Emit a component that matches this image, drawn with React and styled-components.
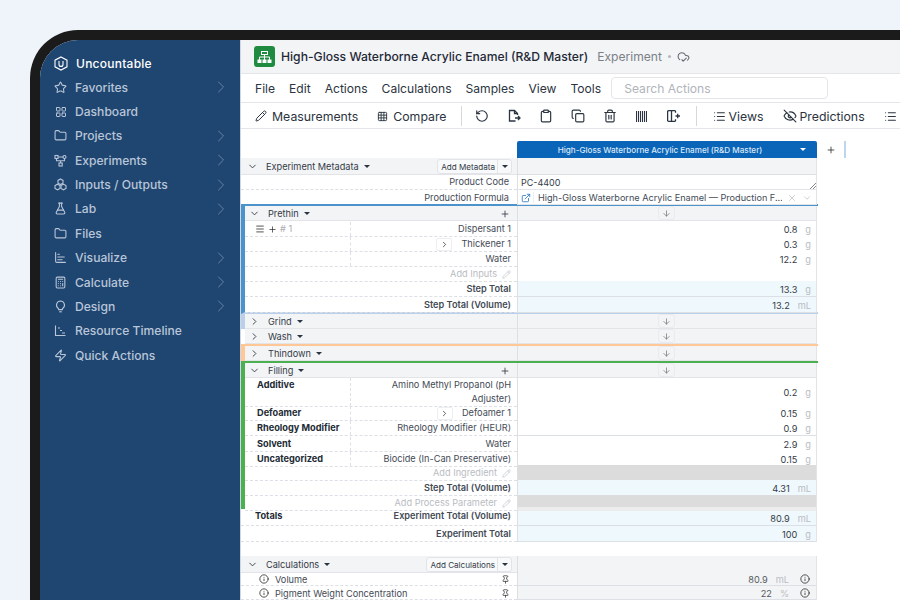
import React from 'react'
import styled, { createGlobalStyle } from 'styled-components'
import {
  Star, LayoutGrid, Folder, FlaskConical, ChartBar, Calculator, Zap,
  ChevronRight, ChevronDown, Pencil, Grid3x3, RotateCcw, Clipboard, Copy, Trash2,
  List, EyeOff, Plus, Menu, ArrowDown, X, ExternalLink, Info, Pin, CloudCheck,
} from 'lucide-react'

const GlobalStyle = createGlobalStyle`
  html, body { margin: 0; padding: 0; height: 600px; overflow: hidden; }
  * { box-sizing: border-box; }
  body { font-family: Inter, "Liberation Sans", sans-serif; }
`

const Page = styled.div`
  width: 900px;
  height: 600px;
  overflow: hidden;
  background: #eff4fb;
  padding: 30px 0 0 30px;
`

const Device = styled.div`
  display: flex;
  width: 880px;
  height: 600px;
  border-top: 10px solid #1b1b1b;
  border-left: 10px solid #1b1b1b;
  border-top-left-radius: 48px;
  overflow: hidden;
  background: #fff;
`

const Sidebar = styled.nav`
  flex: 0 0 200px;
  background: #1f4571;
  padding: 12px 0 0 14px;
`

const Brand = styled.div`
  display: flex;
  align-items: center;
  gap: 8px;
  height: 23px;
  color: #fff;
  font-size: 12px;
  font-weight: 500;
  letter-spacing: 0.25px;
`

const NavItem = styled.div`
  display: flex;
  align-items: center;
  height: 24.36px;
  color: #b9c6d8;
  font-size: 12.1px;
  font-weight: 500;
  svg { flex: none; }
`

const NavIcon = styled.span`
  display: flex;
  justify-content: center;
  width: 13px;
  margin-right: 8px;
`

const NavLabel = styled.span`
  flex: 1;
`

const NavChevron = styled.span`
  display: flex;
  width: 20px;
  margin-right: 9px;
  color: #7089a8;
`

const Main = styled.main`
  flex: 1;
  min-width: 0;
  overflow: hidden;
  border-left: 1px solid #cfd6e4;
`

const TitleBar = styled.header`
  display: flex;
  align-items: center;
  height: 34px;
  padding-left: 13px;
  background: #f3f4f6;
  border-bottom: 1px solid #e3e5e9;
`

const AppLogo = styled.span`
  display: flex;
  align-items: center;
  justify-content: center;
  width: 21px;
  height: 21px;
  margin-right: 6px;
  border-radius: 3px;
  background: #1f8b40;
`

const Title = styled.span`
  font-size: 12.17px;
  font-weight: 500;
  color: #1f2937;
  white-space: nowrap;
`

const Kind = styled.span`
  margin-left: 9px;
  font-size: 12.1px;
  color: #7b8088;
`

const Dot = styled.span`
  width: 3px;
  height: 3px;
  margin: 0 6px;
  border-radius: 50%;
  background: #b4b8be;
`

const MenuBar = styled.div`
  display: flex;
  align-items: center;
  height: 29px;
  padding-left: 14px;
  gap: 10px;
  font-size: 12.1px;
  color: #2b3440;
  border-bottom: 1px solid #e3e5e9;
`

const MenuList = styled.div`
  display: flex;
  gap: 14px;
`

const SearchBox = styled.div`
  width: 217px;
  height: 22px;
  padding: 0 12px;
  display: flex;
  align-items: center;
  border: 1px solid #e3e5e9;
  border-radius: 4px;
  color: #b0b4ba;
  font-size: 12.1px;
`

const ToolBar = styled.div`
  display: flex;
  align-items: center;
  height: 26px;
  padding: 1px 0 0 14px;
  font-size: 12.3px;
  color: #2b3440;
  white-space: nowrap;
  border-bottom: 1px solid #e3e5e9;
`

const ToolButton = styled.span`
  display: flex;
  align-items: center;
  gap: ${({ $gap }) => $gap || 3}px;
  margin-right: ${({ $mr }) => $mr || 0}px;
`

const ToolDivider = styled.span`
  width: 1px;
  height: 20px;
  margin: ${({ $m }) => $m};
  background: #d5d8dd;
`

const IconButton = styled.span`
  display: flex;
  justify-content: center;
  width: 14px;
  margin-right: ${({ $mr }) => $mr ?? 18}px;
`

const Sheet = styled.div`
  padding: 12px 0 0 0;
`

const ColumnRow = styled.div`
  display: flex;
  align-items: center;
  height: 17px;
  padding-left: 276px;
`

const ColumnHead = styled.div`
  position: relative;
  width: 300px;
  height: 17px;
  display: flex;
  align-items: center;
  justify-content: center;
  padding-right: 14px;
  background: #0a64b8;
  border-radius: 2px 2px 0 0;
  color: #dbe8f6;
  font-size: 8.1px;
  font-weight: 500;
`

const WhiteCaret = styled.span`
  position: absolute;
  right: 11px;
  top: 7px;
  border: 3px solid transparent;
  border-top: 3px solid #fff;
  border-bottom: 0;
`

const AddColumn = styled.span`
  display: flex;
  margin-left: 9px;
  color: #333;
`

const ColumnMark = styled.span`
  width: 2px;
  height: 17px;
  margin-left: 8px;
  background: #bcd6ee;
`

const Section = styled.section`
  width: 577px;
  border-top: ${({ $top }) => ($top ? `2px solid ${$top}` : 'none')};
  border-left: 4px solid ${({ $accent }) => $accent || 'transparent'};
  border-bottom: ${({ $bottom }) => ($bottom ? `2px solid ${$bottom}` : 'none')};
`

const Row = styled.div`
  display: grid;
  grid-template-columns: ${({ $flush }) => ($flush ? '272px' : '276px')} 300px;
  height: ${({ $h }) => $h || 15}px;
`

const GroupLabel = styled.div`
  display: flex;
  align-items: center;
  padding: 1px ${({ $pr }) => $pr || 5}px 0 ${({ $pl }) => $pl}px;
  background: #f3f4f6;
  border-bottom: 1px solid #e2e4e8;
  font-size: 9.2px;
  color: #333b47;
  white-space: nowrap;
`

const GroupName = styled.span`
  margin-left: 8px;
`

const Caret = styled.span`
  margin-left: 5px;
  border: 3px solid transparent;
  border-top: 3px solid #2b3440;
  border-bottom: 0;
`

const Push = styled.span`
  flex: 1;
`

const SplitButton = styled.span`
  display: flex;
  align-items: center;
  height: 15px;
  border: 1px solid #e2e4e8;
  border-radius: 3px;
  background: #f8f9fa;
  font-size: 8.1px;
  color: #333b47;
`

const SplitText = styled.span`
  padding: 0 2px 0 3px;
`

const SplitCaret = styled.span`
  display: flex;
  align-items: center;
  justify-content: center;
  width: 14px;
  height: 100%;
  padding-right: 4px;
  border-left: 1px solid #e2e4e8;
`

const GroupValue = styled.div`
  display: flex;
  align-items: center;
  justify-content: center;
  background: #f3f4f6;
  border-left: 1px solid #dcdfe4;
  border-bottom: 1px solid #e2e4e8;
  border-right: 1px solid #e2e4e8;
`

const ArrowButton = styled.span`
  display: flex;
  align-items: center;
  justify-content: center;
  width: 17px;
  height: 14px;
  margin-right: 2px;
  border: 1px solid #e9ebee;
  border-radius: 3px;
  color: #777;
`

const LabelCell = styled.div`
  display: flex;
  align-items: ${({ $top }) => ($top ? 'flex-start' : 'center')};
  padding-top: ${({ $top }) => ($top ? 0 : 1)}px;
  font-size: 9.2px;
  line-height: 14px;
  color: #444b56;
  border-bottom: ${({ $plain }) => ($plain ? 'none' : '1px dashed #dcdfe4')};
`

const Category = styled.div`
  flex: 0 0 106px;
  align-self: stretch;
  display: flex;
  align-items: ${({ $top }) => ($top ? 'flex-start' : 'center')};
  padding-left: 12px;
  font-weight: 700;
  color: #222a35;
  border-right: 1px dashed #dcdfe4;
  white-space: nowrap;
`

const RowTools = styled.span`
  display: flex;
  align-items: center;
  gap: 3px;
  margin-left: -2px;
  color: #333;
`

const RowIndex = styled.span`
  font-weight: 400;
  color: #a9acb2;
`

const Name = styled.div`
  flex: 1;
  display: flex;
  align-items: ${({ $top }) => ($top ? 'flex-start' : 'center')};
  justify-content: flex-end;
  padding: 0 ${({ $pr }) => $pr || 6}px 0 ${({ $wrap }) => ($wrap ? 30 : 0)}px;
  text-align: right;
  color: ${({ $faint }) => ($faint ? '#b9bcc2' : '#444b56')};
  font-weight: ${({ $bold }) => ($bold ? 600 : 400)};
  white-space: ${({ $wrap }) => ($wrap ? 'normal' : 'nowrap')};
`

const Expand = styled.span`
  display: flex;
  align-items: center;
  justify-content: center;
  width: 16px;
  height: 13px;
  margin-right: 9px;
  border: 1px solid #eceef1;
  border-radius: 2px;
  color: #333;
`

const ValueCell = styled.div`
  display: flex;
  align-items: center;
  justify-content: flex-end;
  padding: 1px 5px 0 0;
  background: ${({ $tone }) =>
    ({ total: '#eff8fc', off: '#dcdcdc', calc: '#f3f4f6' }[$tone] || '#fff')};
  border-left: 1px solid #dcdfe4;
  border-right: 1px solid #e2e4e8;
  border-top: ${({ $inset }) => ($inset ? '2px solid #ececec' : 'none')};
  border-bottom: ${({ $fade }) => ($fade ? '4px solid #ececec' : '1px solid #dcdfe4')};
  font-size: 9.2px;
  color: ${({ $tone }) => ($tone === 'calc' ? '#55595f' : '#333b47')};
`

const Unit = styled.span`
  margin-left: 8px;
  color: #b9bcc2;
`

const InfoSlot = styled.span`
  display: flex;
  margin-left: 11px;
  margin-right: 1px;
  color: #333;
`

const TextValue = styled.div`
  position: relative;
  display: flex;
  align-items: center;
  padding: 1px 4px 0 3px;
  border-left: 1px solid #dcdfe4;
  border-right: 1px solid #e2e4e8;
  border-bottom: 1px solid #e2e4e8;
  font-size: 9px;
  color: #333b47;
`

const Resize = styled.svg`
  position: absolute;
  right: 0;
  bottom: 0;
`

const FormulaText = styled.span`
  flex: 1;
  margin-left: 2px;
  padding-left: 4px;
  border-left: 1px solid #eceef1;
  font-size: 9.15px;
  white-space: nowrap;
  overflow: hidden;
  color: #444b56;
`

const Faint = styled.span`
  display: flex;
  margin-left: 5px;
  color: #c4c7cc;
`

const Spacer = styled.div`
  height: 14px;
`

const CalcLabel = styled.div`
  display: flex;
  align-items: center;
  padding: 1px 7px 0 18px;
  gap: 6px;
  font-size: 9.2px;
  color: #444b56;
  border-bottom: 1px dashed #dcdfe4;
`

const TotalsLabel = styled(Category)`
  flex-basis: 104px;
  padding-left: 14px;
  border-right: none;
  align-items: flex-start;
`

function ClusterIcon() {
  return (
    <svg width="13" height="13" viewBox="0 0 13 13" fill="none" stroke="currentColor" strokeWidth="1.1">
      <path d="M6.5 1 9 2.4v2.8L6.5 6.6 4 5.2V2.4z" />
      <path d="M3.5 6.2 6 7.6v2.8l-2.5 1.4L1 10.4V7.6z" />
      <path d="M9.5 6.2 12 7.6v2.8l-2.5 1.4L7 10.4V7.6z" />
    </svg>
  )
}

function TreeIcon() {
  return (
    <svg width="13" height="13" viewBox="0 0 13 13" fill="none" stroke="currentColor" strokeWidth="1.1">
      <rect x="1" y="1.5" width="3" height="3" />
      <circle cx="10.5" cy="3" r="1.5" />
      <rect x="5" y="9" width="3.2" height="3" />
      <path d="M4 3h5M2.5 4.5v2.2h4v2.3M10.5 4.5v2.2h-4" />
    </svg>
  )
}

function BulbIcon() {
  return (
    <svg width="13" height="13" viewBox="0 0 13 13" fill="none" stroke="currentColor" strokeWidth="1.1">
      <path d="M6.5 1a4 4 0 0 0-2.6 7c.5.5.8 1 .8 1.6h3.6c0-.6.3-1.1.8-1.6A4 4 0 0 0 6.500 1z" />
      <path d="M5.200 11.800h2.600" />
    </svg>
  )
}

function TimelineIcon() {
  return (
    <svg width="13" height="13" viewBox="0 0 13 13" fill="none" stroke="currentColor" strokeWidth="1.1">
      <path d="M1.5 1.5v10h10" />
      <path d="M4 4h2M6 6.5h2M8 9h3" />
    </svg>
  )
}

function BrandIcon() {
  return (
    <svg width="14" height="15" viewBox="0 0 14 15" fill="none" stroke="#fff" strokeWidth="1.1">
      <path d="M7 .9 13 4.2v6.6l-6 3.3-6-3.3V4.2z" />
      <path d="M5 5v3.4a2 2 0 0 0 4 0V5" />
    </svg>
  )
}

function LogoIcon() {
  return (
    <svg width="15" height="14" viewBox="0 0 15 14" fill="none" stroke="#fff" strokeWidth="1">
      <rect x="4.500" y="1.500" width="6" height="3" />
      <path d="M7.500 4.500v2.500M2.500 10V7h10v3M7.500 7v3" />
      <rect x="1" y="10" width="3" height="2.500" fill="#fff" />
      <rect x="6" y="10" width="3" height="2.500" fill="#fff" />
      <rect x="11" y="10" width="3" height="2.500" fill="#fff" />
    </svg>
  )
}

function FileArrowIcon() {
  return (
    <svg width="14" height="14" viewBox="0 0 14 14" fill="none" stroke="#2b3440" strokeWidth="1.3">
      <path d="M8.500 12h-6V1.500h5l3 3V6" />
      <path d="M7.500 1.500v3h3" />
      <path d="M8 9h5M11 7l2 2-2 2" />
    </svg>
  )
}

function BarcodeIcon() {
  return (
    <svg width="11" height="11" viewBox="0 0 11 11" stroke="#2b3440" strokeWidth="1.1">
      <path d="M.5 0v11M2.500 0v11M4.500 0v11M6.500 0v11M8.500 0v11M10.500 0v11" />
    </svg>
  )
}

function PanelAddIcon() {
  return (
    <svg width="13" height="12" viewBox="0 0 13 12" fill="none" stroke="#2b3440" strokeWidth="1.3">
      <path d="M8.500.7H1.600a1 1 0 0 0-1 1v8.600a1 1 0 0 0 1 1h6.900" />
      <path d="M4.500.7v10.600" />
      <path d="M8.500.7v2M8.500 9.300v2M8.500 6h4.500M10.700 3.800v4.400" />
    </svg>
  )
}

const navItems = [
  { label: 'Favorites', icon: <Star size={13} />, more: true },
  { label: 'Dashboard', icon: <LayoutGrid size={12} /> },
  { label: 'Projects', icon: <Folder size={13} />, more: true },
  { label: 'Experiments', icon: <TreeIcon />, more: true },
  { label: 'Inputs / Outputs', icon: <ClusterIcon />, more: true },
  { label: 'Lab', icon: <FlaskConical size={13} />, more: true },
  { label: 'Files', icon: <Folder size={13} /> },
  { label: 'Visualize', icon: <ChartBar size={13} />, more: true },
  { label: 'Calculate', icon: <Calculator size={13} />, more: true },
  { label: 'Design', icon: <BulbIcon />, more: true },
  { label: 'Resource Timeline', icon: <TimelineIcon /> },
  { label: 'Quick Actions', icon: <Zap size={13} /> },
]

const menus = ['File', 'Edit', 'Actions', 'Calculations', 'Samples', 'View', 'Tools']

function GroupRow({ name, open, plus, h }) {
  return (
    <Row $flush $h={h}>
      <GroupLabel $pl={4} $pr={7}>
        {open ? <ChevronDown size={11} /> : <ChevronRight size={11} />}
        <GroupName>{name}</GroupName>
        <Caret />
        <Push />
        {plus && <Plus size={10} />}
      </GroupLabel>
      <GroupValue>
        <ArrowButton><ArrowDown size={9} /></ArrowButton>
      </GroupValue>
    </Row>
  )
}

function IngredientRow({ category, name, value, unit, expand, h, wrap, tools }) {
  return (
    <Row $flush $h={h}>
      <LabelCell $top={wrap}>
        <Category $top={wrap}>
          {tools ? (
            <RowTools>
              <Menu size={10} />
              <Plus size={9} />
              <RowIndex># 1</RowIndex>
            </RowTools>
          ) : category}
        </Category>
        <Name $wrap={wrap}>
          {expand && <Expand><ChevronRight size={9} /></Expand>}
          {name}
        </Name>
      </LabelCell>
      <ValueCell>
        {value}
        <Unit>{unit}</Unit>
      </ValueCell>
    </Row>
  )
}

function PlainRow({ name, value, unit, tone, fade, faint, bold, h }) {
  return (
    <Row $flush $h={h}>
      <LabelCell>
        <Name $faint={faint} $bold={bold}>
          {name}
          {faint && <Faint><Pencil size={9} /></Faint>}
        </Name>
      </LabelCell>
      <ValueCell $tone={tone} $fade={fade}>
        {value}
        {unit && <Unit>{unit}</Unit>}
      </ValueCell>
    </Row>
  )
}

function SplitGroupRow({ name, action }) {
  return (
    <Row $h={16}>
      <GroupLabel $pl={6}>
        <ChevronDown size={11} />
        <GroupName>{name}</GroupName>
        <Caret />
        <Push />
        <SplitButton>
          <SplitText>{action}</SplitText>
          <SplitCaret><Caret /></SplitCaret>
        </SplitButton>
      </GroupLabel>
      <ValueCell $tone="calc" />
    </Row>
  )
}

function CalcRow({ name, value, unit }) {
  return (
    <Row $h={14}>
      <CalcLabel>
        <Info size={10} color="#333" />
        {name}
        <Push />
        <Pin size={9} color="#333" />
      </CalcLabel>
      <ValueCell $tone="calc">
        {value}
        <Unit>{unit}</Unit>
        <InfoSlot><Info size={10} /></InfoSlot>
      </ValueCell>
    </Row>
  )
}

export default function App() {
  return (
    <Page>
      <GlobalStyle />
      <Device>
        <Sidebar>
          <Brand>
            <BrandIcon />
            Uncountable
          </Brand>
          {navItems.map((item) => (
            <NavItem key={item.label}>
              <NavIcon>{item.icon}</NavIcon>
              <NavLabel>{item.label}</NavLabel>
              <NavChevron>{item.more && <ChevronRight size={20} strokeWidth={1.1} />}</NavChevron>
            </NavItem>
          ))}
        </Sidebar>
        <Main>
          <TitleBar>
            <AppLogo><LogoIcon /></AppLogo>
            <Title>High-Gloss Waterborne Acrylic Enamel (R&D Master)</Title>
            <Kind>Experiment</Kind>
            <Dot />
            <CloudCheck size={13} color="#666b73" />
          </TitleBar>
          <MenuBar>
            <MenuList>
              {menus.map((menu) => <span key={menu}>{menu}</span>)}
            </MenuList>
            <SearchBox>Search Actions</SearchBox>
          </MenuBar>
          <ToolBar>
            <ToolButton $gap={5} $mr={19}><Pencil size={12} />Measurements</ToolButton>
            <ToolButton $gap={5}><Grid3x3 size={11} />Compare</ToolButton>
            <ToolDivider $m="0 13px 0 14px" />
            <IconButton><RotateCcw size={14} /></IconButton>
            <IconButton><FileArrowIcon /></IconButton>
            <IconButton><Clipboard size={14} /></IconButton>
            <IconButton><Copy size={14} /></IconButton>
            <IconButton><Trash2 size={14} /></IconButton>
            <IconButton><BarcodeIcon /></IconButton>
            <IconButton $mr={15}><PanelAddIcon /></IconButton>
            <ToolDivider $m="0 16px 0 0" />
            <ToolButton $mr={19}><List size={13} />Views</ToolButton>
            <ToolButton $mr={19}><EyeOff size={14} />Predictions</ToolButton>
            <ToolButton><List size={13} /></ToolButton>
          </ToolBar>
          <Sheet>
            <ColumnRow>
              <ColumnHead>
                High-Gloss Waterborne Acrylic Enamel (R&D Master)
                <WhiteCaret />
              </ColumnHead>
              <AddColumn><Plus size={10} /></AddColumn>
              <ColumnMark />
            </ColumnRow>

            <SplitGroupRow name="Experiment Metadata" action="Add Metadata" />
            <Row $h={16}>
              <LabelCell><Name $pr={8}>Product Code</Name></LabelCell>
              <TextValue>
                PC-4400
                <Resize width="6" height="6" viewBox="0 0 6 6" stroke="#888">
                  <path d="M0 6 6 0M3 6l3-3" />
                </Resize>
              </TextValue>
            </Row>
            <Row $h={14}>
              <LabelCell $plain><Name $pr={8}>Production Formula</Name></LabelCell>
              <TextValue>
                <ExternalLink size={10} color="#2a78c4" />
                <FormulaText>High-Gloss Waterborne Acrylic Enamel — Production F...</FormulaText>
                <Faint><X size={10} /></Faint>
                <Faint><ChevronDown size={10} /></Faint>
              </TextValue>
            </Row>

            <Section $accent="#4d93cb" $top="#4d93cb" $bottom="#b9cfea">
              <GroupRow name="Prethin" open plus h={15} />
              <IngredientRow tools name="Dispersant 1" value="0.8" unit="g" />
              <IngredientRow name="Thickener 1" value="0.3" unit="g" expand />
              <IngredientRow name="Water" value="12.2" unit="g" />
              <PlainRow name="Add Inputs" faint />
              <PlainRow name="Step Total" value="13.3" unit="g" tone="total" bold h={16} />
              <PlainRow name="Step Total (Volume)" value="13.2" unit="mL" tone="total" bold />
            </Section>
            <Section $accent="#b9cfea"><GroupRow name="Grind" h={15} /></Section>
            <Section><GroupRow name="Wash" h={15} /></Section>
            <Section $accent="#ffc796" $top="#ffc796"><GroupRow name="Thindown" h={15} /></Section>
            <Section $accent="#4caf50" $top="#4caf50">
              <GroupRow name="Filling" open plus h={15} />
              <IngredientRow category="Additive" name="Amino Methyl Propanol (pH Adjuster)" value="0.2" unit="g" h={27} wrap />
              <IngredientRow category="Defoamer" name="Defoamer 1" value="0.15" unit="g" expand />
              <IngredientRow category="Rheology Modifier" name="Rheology Modifier (HEUR)" value="0.9" unit="g" h={16} />
              <IngredientRow category="Solvent" name="Water" value="2.9" unit="g" />
              <IngredientRow category="Uncategorized" name="Biocide (In-Can Preservative)" value="0.15" unit="g" h={14} />
              <PlainRow name="Add Ingredient" tone="off" faint />
              <PlainRow name="Step Total (Volume)" value="4.31" unit="mL" tone="total" bold />
              <PlainRow name="Add Process Parameter" tone="off" fade faint h={14} />
            </Section>
            <Row $h={17}>
              <LabelCell $top>
                <TotalsLabel>Totals</TotalsLabel>
                <Name $top $bold>Experiment Total (Volume)</Name>
              </LabelCell>
              <ValueCell $tone="total" $inset>80.9<Unit>mL</Unit></ValueCell>
            </Row>
            <Row $h={16}>
              <LabelCell><Name $bold>Experiment Total</Name></LabelCell>
              <ValueCell $tone="total">100<Unit>g</Unit></ValueCell>
            </Row>
            <Spacer />
            <SplitGroupRow name="Calculations" action="Add Calculations" />
            <CalcRow name="Volume" value="80.9" unit="mL" />
            <CalcRow name="Pigment Weight Concentration" value="22" unit="%" />
          </Sheet>
        </Main>
      </Device>
    </Page>
  )
}
